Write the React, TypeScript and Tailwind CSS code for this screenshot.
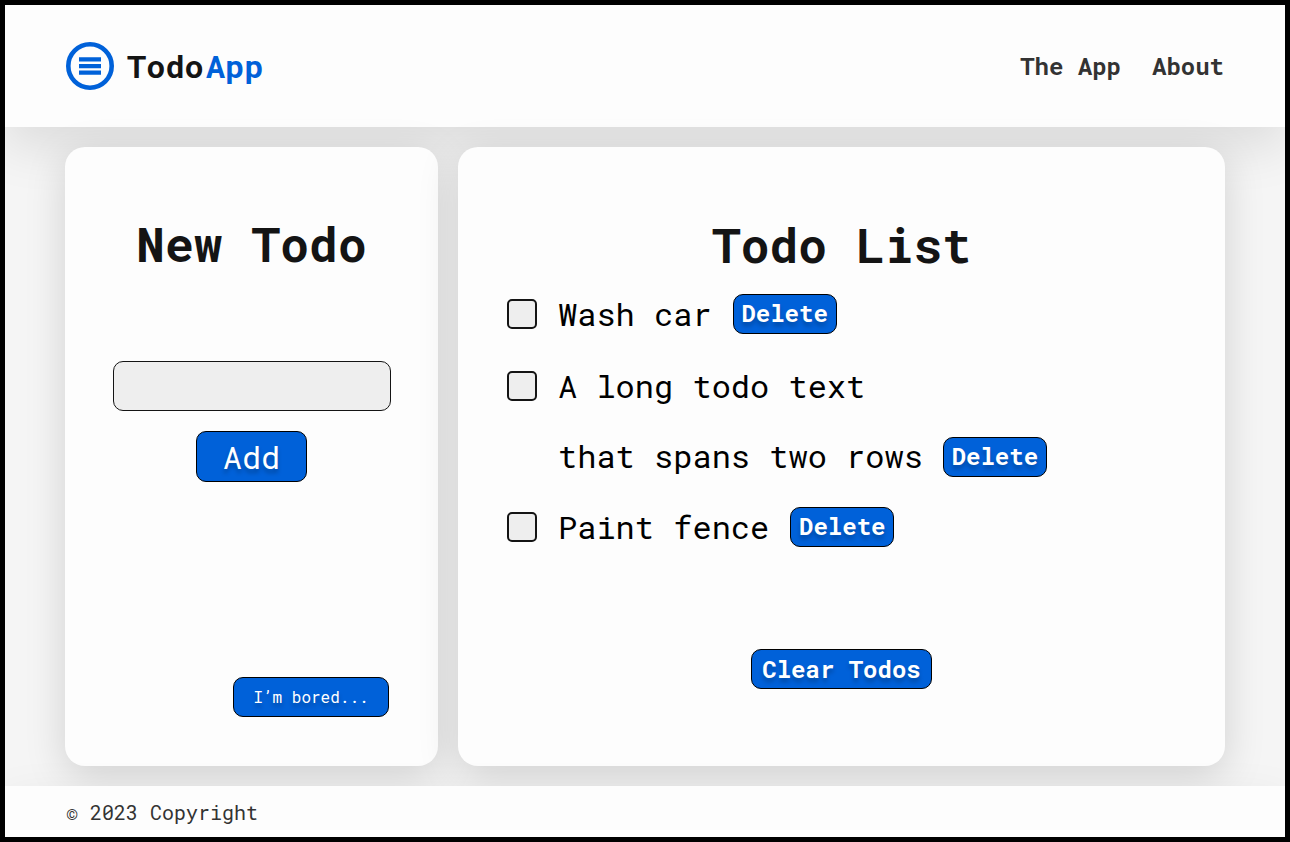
import React, { useState } from "react";

const barShadow = "shadow-[0_20px_50px_rgba(0,0,0,0.1)]";
const cardShadow = "shadow-[0_10px_40px_rgba(0,0,0,0.15)]";
const buttonBase =
  "flex items-center justify-center rounded-[10px] border border-black bg-[#0061d9] text-white [text-shadow:0_4px_4px_rgba(0,0,0,0.25)]";

type Todo = { id: number; lines: string[] };

const initialTodos: Todo[] = [
  { id: 1, lines: ["Wash car"] },
  { id: 2, lines: ["A long todo text", "that spans two rows"] },
  { id: 3, lines: ["Paint fence"] },
];

function Logo() {
  return (
    <div className="flex items-center">
      <svg width="48" height="48" viewBox="0 0 48 48" aria-hidden="true">
        <circle cx="24" cy="24" r="21.7" fill="none" stroke="#0061d9" strokeWidth="4.6" />
        <path d="M13 15.2h22v4.3H13zM13 21.9h22v4.3H13zM13 28.5h22v4.3H13z" fill="#0061d9" />
      </svg>
      <span className="ml-[13px] text-[32px] leading-none font-bold text-[#141414]">Todo</span>
      <span className="ml-[2px] text-[32px] leading-none font-bold text-[#0061d9]">App</span>
    </div>
  );
}

function TodoRow({ todo, onDelete }: { todo: Todo; onDelete: () => void }) {
  const multiline = todo.lines.length > 1;
  return (
    <li className={`flex items-start gap-[21px] ${multiline ? "-mb-px pt-px" : ""}`}>
      <button aria-label="Toggle" className="mt-[21px] size-[30px] shrink-0 rounded-[5px] border-2 border-[#141414] bg-[#eeeeee]" />
      <div>
        {todo.lines.map((line, i) => (
          <div key={line} className="flex h-[71px] items-center gap-[21px]">
            <span className={`whitespace-nowrap text-[32px] leading-none text-black ${i > 0 ? "pb-[2px]" : ""}`}>{line}</span>
            {i === todo.lines.length - 1 && (
              <button
                onClick={onDelete}
                className={`${buttonBase} h-10 w-[104px] pb-[2px] text-[24px] leading-none font-bold ${multiline ? "-ml-px" : ""}`}
              >
                Delete
              </button>
            )}
          </div>
        ))}
      </div>
    </li>
  );
}

export default function App() {
  const [todos, setTodos] = useState(initialTodos);

  return (
    <div className="flex h-[842px] w-[1290px] flex-col overflow-hidden border-[5px] border-black bg-[#f5f5f5] font-['Roboto_Mono','Noto_Sans_Mono','DejaVu_Sans_Mono',monospace]">
      <header className={`flex h-[122px] shrink-0 items-center justify-between bg-[#fdfdfd] px-[61px] ${barShadow}`}>
        <Logo />
        <nav className="flex gap-[31px] text-[24px] leading-none font-bold text-[#333333]">
          <a href="#app">The App</a>
          <a href="#about">About</a>
        </nav>
      </header>

      <main className="flex flex-1 gap-5 px-[60px] py-5">
        <section className={`flex w-[373px] flex-col items-center rounded-[20px] bg-[#fdfdfd] px-12 pt-[65px] ${cardShadow}`}>
          <h1 className="text-[48px] leading-[64px] font-bold text-[#141414]">New Todo</h1>
          <input aria-label="New todo" className="mt-[85px] h-[50px] w-[278px] shrink-0 rounded-[10px] border border-[#141414] bg-[#eeeeee] px-3 text-2xl" />
          <button className={`${buttonBase} mt-5 h-[51px] w-[111px] shrink-0 text-[32px] leading-none`}>Add</button>
          <button className={`${buttonBase} mt-auto mr-px mb-[49px] h-10 w-[156px] shrink-0 self-end text-[16px] leading-none`}>
            I’m bored...
          </button>
        </section>

        <section className={`flex flex-1 flex-col items-center rounded-[20px] bg-[#fdfdfd] px-[49px] pt-[66px] ${cardShadow}`}>
          <h1 className="text-[48px] leading-[64px] font-bold text-[#141414]">Todo List</h1>
          <ul className="mt-px w-full">
            {todos.map((todo) => (
              <TodoRow
                key={todo.id}
                todo={todo}
                onDelete={() => setTodos(todos.filter((t) => t.id !== todo.id))}
              />
            ))}
          </ul>
          <button
            onClick={() => setTodos([])}
            className={`${buttonBase} mt-auto mb-[77px] h-10 w-[181px] shrink-0 text-[24px] leading-none font-bold`}
          >
            Clear Todos
          </button>
        </section>
      </main>

      <footer className={`flex h-[51px] shrink-0 items-center bg-[#fdfdfd] pt-px pl-[61px] text-[20px] leading-none text-[#333333] ${barShadow}`}>
        © 2023 Copyright
      </footer>
    </div>
  );
}
